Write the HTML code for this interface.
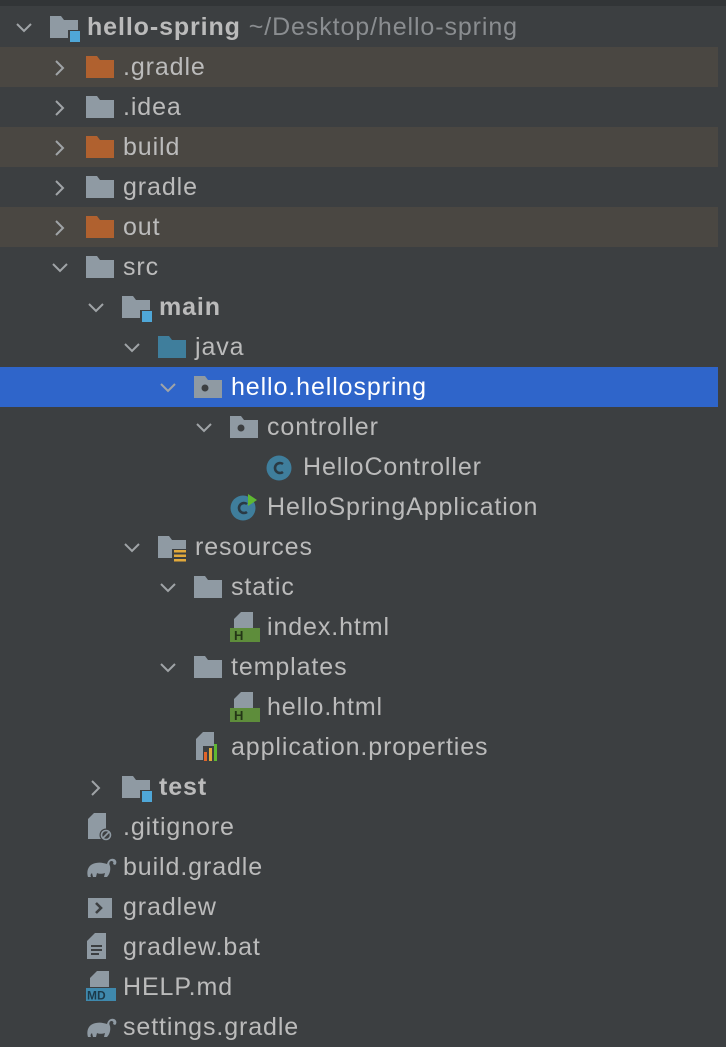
<!DOCTYPE html><html><head><style>
body{margin:0;width:726px;height:1042px;background:#3c3f41;overflow:hidden;font-family:"Liberation Sans",sans-serif;position:relative}
.top{position:absolute;left:0;top:0;width:726px;height:6px;background:#323537}
.r{position:absolute;left:0;width:718px;height:40px}
.hl{background:#4a4742}
.sel{background:#2f65ca}
.r>*{position:absolute}
.ch{top:12px;width:18px;height:18px}
.ic{top:9px}
.t{top:6px;font-size:25px;letter-spacing:0.9px;color:#bbbbbb;line-height:28px;white-space:nowrap}
.b{font-weight:bold}
.sel .t{color:#fff}
</style></head><body>
<div class="top"></div>
<svg width="0" height="0" style="position:absolute"><defs>
<path id="fd" d="M0 0h11l3 4h14v18H0z"/>
<path id="dn" d="M2 5l7 7 7-7" fill="none" stroke="#a0a4a7" stroke-width="2"/>
<path id="rt" d="M5 2l7 7-7 7" fill="none" stroke="#a0a4a7" stroke-width="2"/>
</defs></svg>
<div id="tree"></div>
<script>
const G='#8f9aa3',O='#b0612f',B='#3f7e9c';
function folder(c){return `<svg class="ic" width="30" height="24"><use href="#fd" fill="${c}"/></svg>`}
function mod(){return `<svg class="ic" width="30" height="26"><use href="#fd" fill="${G}"/><rect x="18" y="14" width="12" height="12" fill="#3c3f41"/><rect x="20" y="15" width="11" height="11" fill="#4fa7d8"/></svg>`}
function pkg(){return `<svg class="ic" width="30" height="24"><use href="#fd" fill="${G}"/><circle cx="11" cy="12" r="3.5" fill="#3c3f41"/></svg>`}
function cls(run){return `<svg class="ic" width="30" height="28" style="top:6px"><circle cx="13" cy="15" r="12.5" fill="#3f7e9c"/><path d="M17 11a5 5 0 1 0 0 8" fill="none" stroke="#2a3a44" stroke-width="2.6"/>${run?'<path d="M18 1l9 6-9 6z" fill="#5fb832"/>':''}</svg>`}
function res(){return `<svg class="ic" width="34" height="28"><use href="#fd" fill="${G}"/><rect x="14" y="13" width="16" height="14" fill="#3c3f41"/><g fill="#e2a93b"><rect x="16" y="14" width="12" height="2.5"/><rect x="16" y="18.5" width="12" height="2.5"/><rect x="16" y="23" width="12" height="2.5"/></g></svg>`}
function html(){return `<svg class="ic" width="32" height="32" style="top:5px"><path d="M11 0h12v16H4V7z" fill="${G}"/><rect x="0" y="16" width="30" height="14" fill="#5e8d3b"/><text x="4" y="28" font-size="13" font-weight="bold" font-family="Liberation Sans" fill="#243616">H</text></svg>`}
function props(){return `<svg class="ic" width="30" height="32" style="top:4px"><path d="M9 1h11v28H2V8z" fill="${G}"/><rect x="9" y="15" width="18" height="16" fill="#3c3f41"/><rect x="10" y="21" width="3" height="9" fill="#e0642a"/><rect x="15" y="17" width="3" height="13" fill="#e2a93b"/><rect x="20" y="13" width="3" height="17" fill="#5fb832"/></svg>`}
function git(){return `<svg class="ic" width="30" height="30" style="top:5px"><path d="M8 1h12v26H2V7z" fill="${G}"/><circle cx="20" cy="23" r="6.5" fill="#3c3f41"/><circle cx="20" cy="23" r="4.5" fill="none" stroke="${G}" stroke-width="1.6"/><path d="M17 26l6-6" stroke="${G}" stroke-width="1.6"/></svg>`}
function ele(){return `<svg class="ic" width="32" height="26" style="top:8px"><path d="M2 22c-2-7 1-13 8-14 4-1 8 0 11 1 1-4 4-6 7-5 3 1 3 5 1 6l-2-1c1-2 0-3-2-3-2 1-2 3-1 5 1 5-1 9-3 11h-3l1-4c-3 1-6 1-8 0l-1 4H7l-1-4c-1 1-2 2-1 4z" fill="${G}"/></svg>`}
function term(){return `<svg class="ic" width="30" height="24" style="top:10px"><rect x="2" y="1" width="24" height="20" fill="${G}"/><path d="M10 6l5 5-5 5" fill="none" stroke="#3c3f41" stroke-width="2.6"/></svg>`}
function txt(){return `<svg class="ic" width="30" height="30" style="top:5px"><path d="M9 1h11v26H1V9z" fill="${G}"/><g fill="#3c3f41"><rect x="5" y="13" width="11" height="2"/><rect x="5" y="17" width="11" height="2"/><rect x="5" y="21" width="8" height="2"/></g></svg>`}
function md(){return `<svg class="ic" width="32" height="32" style="top:4px"><path d="M11 0h12v16H4V7z" fill="${G}"/><rect x="0" y="17" width="30" height="13" fill="#3f89ad"/><text x="1" y="28.5" font-size="12" font-weight="bold" font-family="Liberation Sans" fill="#1c3a4a">MD</text></svg>`}
const rows=[
[0,'d',mod(),'<b>hello-spring</b> <span style="color:#8a8d90">~/Desktop/hello-spring</span>'],
[1,'r',folder(O),'.gradle','hl'],
[1,'r',folder(G),'.idea'],
[1,'r',folder(O),'build','hl'],
[1,'r',folder(G),'gradle'],
[1,'r',folder(O),'out','hl'],
[1,'d',folder(G),'src'],
[2,'d',mod(),'<b>main</b>'],
[3,'d',folder(B),'java'],
[4,'d',pkg(),'hello.hellospring','sel'],
[5,'d',pkg(),'controller'],
[6,'',cls(0),'HelloController'],
[5,'',cls(1),'HelloSpringApplication'],
[3,'d',res(),'resources'],
[4,'d',folder(G),'static'],
[5,'',html(),'index.html'],
[4,'d',folder(G),'templates'],
[5,'',html(),'hello.html'],
[4,'',props(),'application.properties'],
[2,'r',mod(),'<b>test</b>'],
[1,'',git(),'.gitignore'],
[1,'',ele(),'build.gradle'],
[1,'',term(),'gradlew'],
[1,'',txt(),'gradlew.bat'],
[1,'',md(),'HELP.md'],
[1,'',ele(),'settings.gradle']];
let h='';
rows.forEach((r,i)=>{const[l,c,ic,t,cl]=r;const x=50+36*l;
h+=`<div class="r ${cl||''}" style="top:${7+40*i}px">`;
if(c)h+=`<svg class="ch" style="left:${x-35}px"><use href="#${c=='d'?'dn':'rt'}" ${cl=='sel'?'style="stroke:#cfd8ea"':''}/></svg>`;
h+=ic.replace('class="ic"',`class="ic" style="left:${x}px;`+(ic.match(/style="([^"]*)"/)?ic.match(/style="([^"]*)"/)[1]:'')+'"').replace(/(<svg[^>]*?") style="top:[^"]*"/,'$1');
h+=`<span class="t" style="left:${x+37}px">${t}</span></div>`;});
document.getElementById('tree').innerHTML=h;
</script>
</body></html>
